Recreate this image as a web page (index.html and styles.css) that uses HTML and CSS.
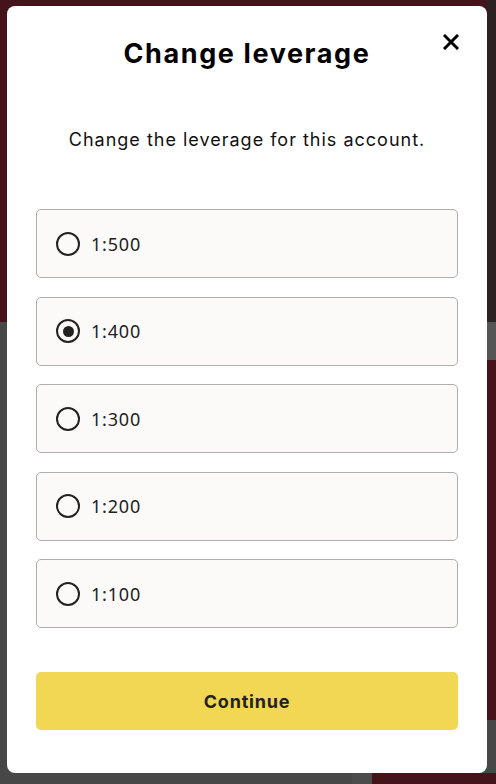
FILE: index.html
```html
<!DOCTYPE html>
<html>
<head>
<meta charset="utf-8">
<link rel="stylesheet" href="styles.css">
</head>
<body>
<div class="backdrop">
  <div class="modal">
    <button class="close" aria-label="Close">
      <svg width="16" height="16" viewBox="0 0 16 16"><path d="M2 2 L14 14 M14 2 L2 14" stroke="#000" stroke-width="3" stroke-linecap="square"/></svg>
    </button>
    <h1 class="title">Change leverage</h1>
    <p class="subtitle">Change the leverage for this account.</p>
    <div class="options">
      <label class="option"><span class="radio"></span><span class="label">1:500</span></label>
      <label class="option"><span class="radio checked"></span><span class="label">1:400</span></label>
      <label class="option"><span class="radio"></span><span class="label">1:300</span></label>
      <label class="option"><span class="radio"></span><span class="label">1:200</span></label>
      <label class="option"><span class="radio"></span><span class="label">1:100</span></label>
    </div>
    <button class="continue">Continue</button>
  </div>
</div>
</body>
</html>
```
FILE: styles.css
```css
html, body {
  margin: 0;
  padding: 0;
  height: 100%;
}
body {
  background-color: #474747;
  background-image:
    linear-gradient(#45131a, #45131a),
    linear-gradient(#2c2224, #2c2224),
    linear-gradient(#555555, #555555),
    linear-gradient(#45131a, #45131a),
    linear-gradient(#45131a, #45131a),
    linear-gradient(#4c4c4c, #4c4c4c);
  background-size:
    487px 322px,
    9px 322px,
    9px 38px,
    9px 360px,
    124px 11px,
    20px 11px;
  background-position:
    0 0,
    487px 0,
    487px 322px,
    487px 360px,
    372px 773px,
    352px 773px;
  background-repeat: no-repeat;
  font-family: "Inter", "Noto Sans", sans-serif;
}
.backdrop {
  padding: 6px 9px 11px 7px;
}
.modal {
  position: relative;
  background: #ffffff;
  border-radius: 8px;
  height: 767px;
  box-sizing: border-box;
  padding: 30px 29px 43px 29px;
  display: flex;
  flex-direction: column;
}
.close {
  position: absolute;
  top: 28px;
  right: 28px;
  width: 16px;
  height: 16px;
  padding: 0;
  border: 0;
  background: none;
  display: flex;
}
.title {
  margin: 0;
  font-size: 27px;
  line-height: 36px;
  font-weight: 700;
  text-align: center;
  color: #000;
  letter-spacing: 1.6px;
}
.subtitle {
  margin: 56px 0 0 0;
  font-size: 18px;
  line-height: 24px;
  text-align: center;
  color: #111;
  letter-spacing: 1px;
}
.options {
  margin-top: 57px;
  display: flex;
  flex-direction: column;
  gap: 18.5px;
}
.option {
  height: 69px;
  box-sizing: border-box;
  border: 1px solid #b0aeab;
  border-radius: 5px;
  background: #fbfaf8;
  display: flex;
  align-items: center;
  padding-left: 19px;
  gap: 11px;
}
.radio {
  width: 24px;
  height: 24px;
  box-sizing: border-box;
  border: 2px solid #222;
  border-radius: 50%;
  display: flex;
  align-items: center;
  justify-content: center;
}
.radio.checked::after {
  content: "";
  width: 11px;
  height: 11px;
  border-radius: 50%;
  background: #222;
}
.label {
  font-family: "Noto Sans", "Open Sans", sans-serif;
  font-size: 18px;
  color: #222;
  letter-spacing: 0.8px;
}
.continue {
  margin-top: 44px;
  height: 58px;
  border: 0;
  border-radius: 5px;
  background: #f2d755;
  font-family: "Inter", "Noto Sans", sans-serif;
  font-size: 18px;
  font-weight: 700;
  color: #222;
  letter-spacing: 0.8px;
}
```
